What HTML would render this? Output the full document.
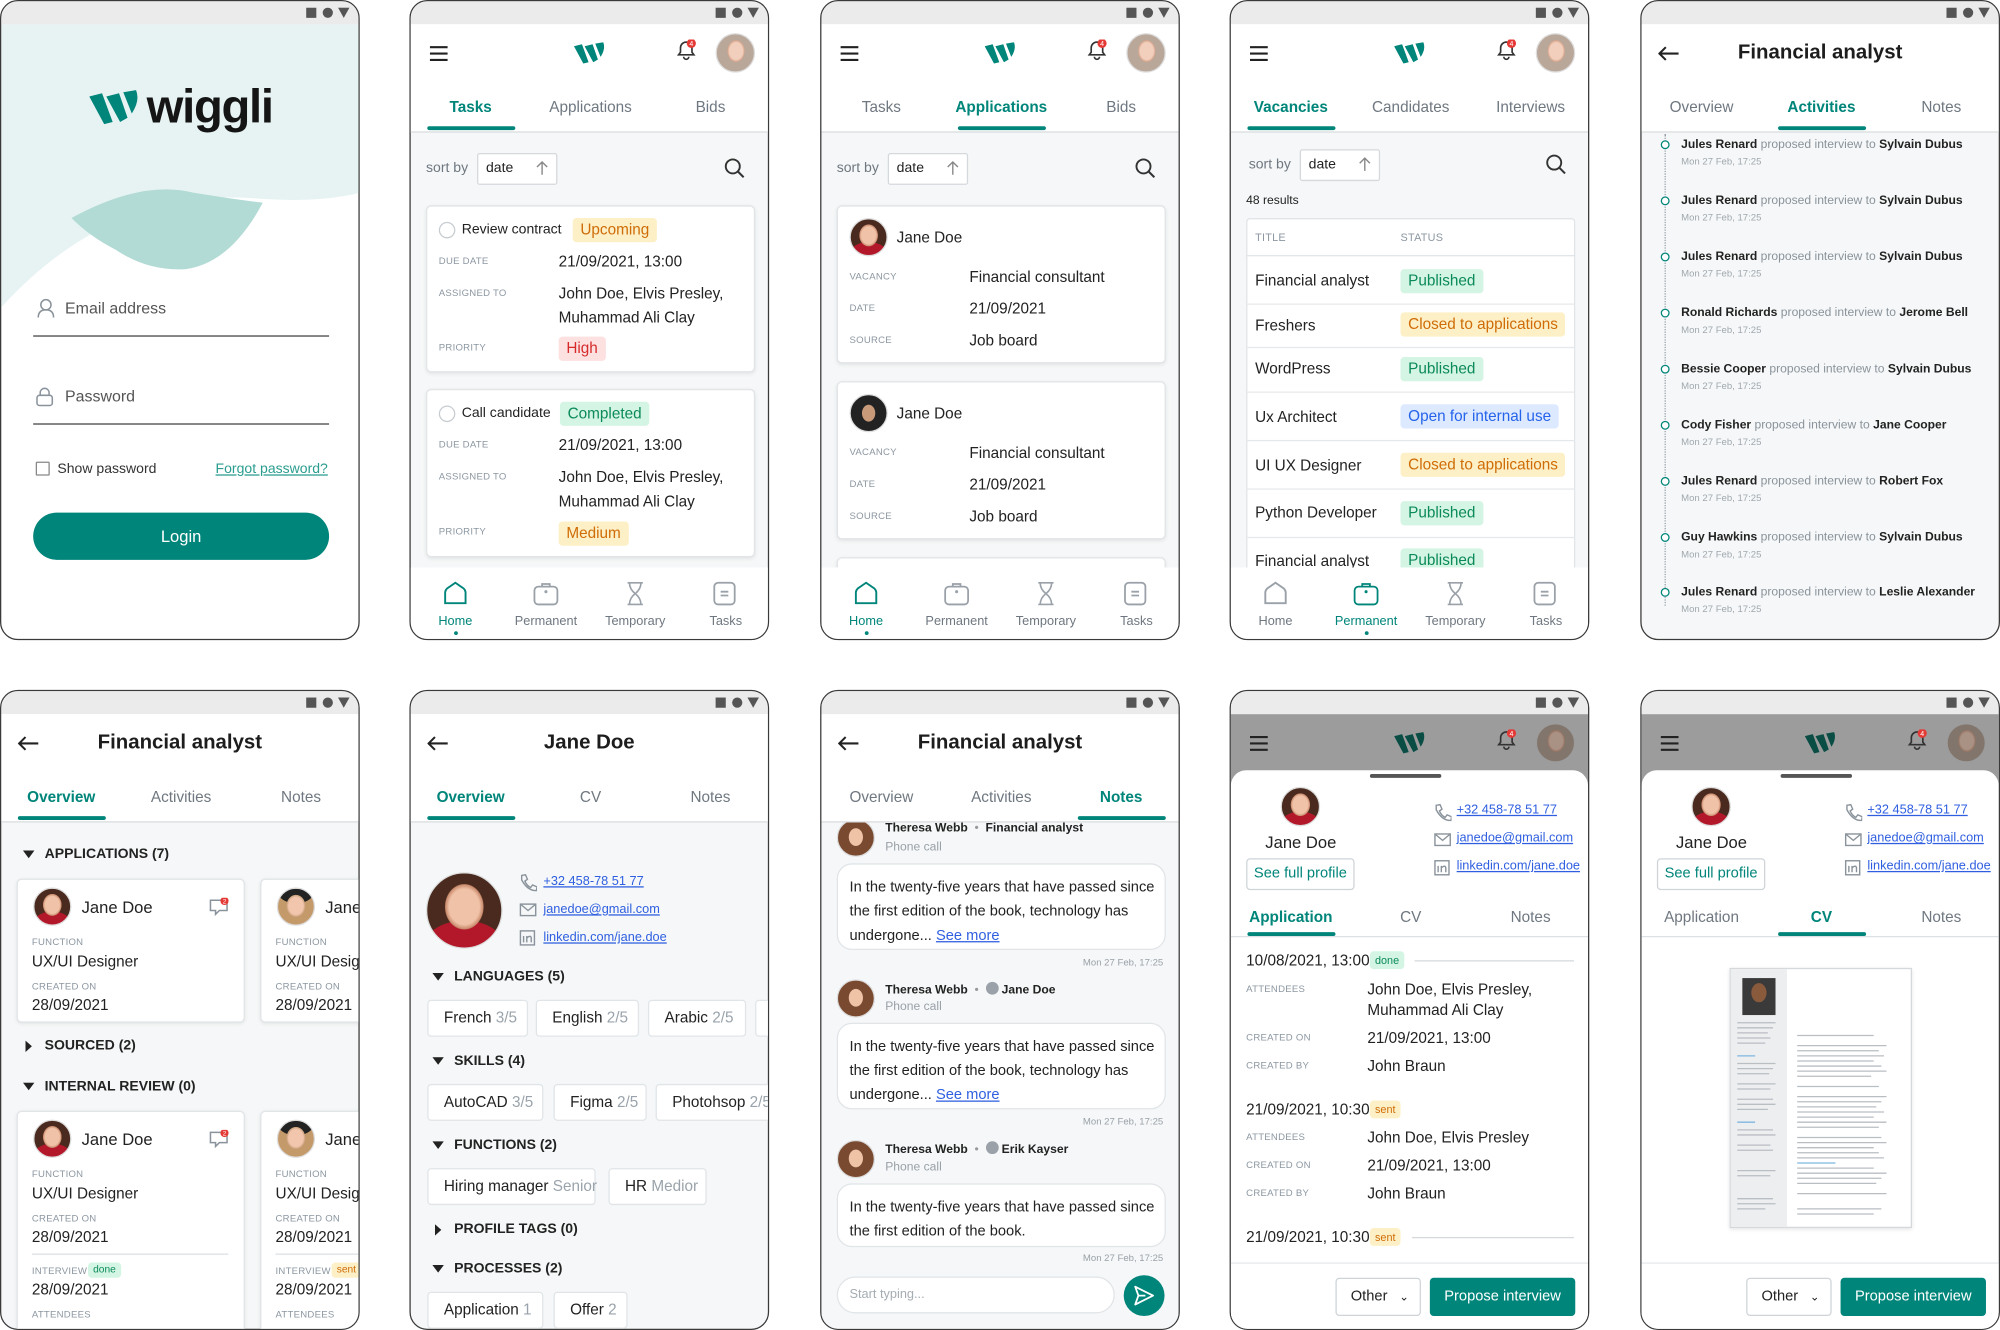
<!DOCTYPE html>
<html><head><meta charset="utf-8"><style>
*{margin:0;padding:0;box-sizing:border-box}
html,body{width:2000px;height:1330px;background:#fff;overflow:hidden;font-family:"Liberation Sans",Arial,sans-serif;color:#222}
#w{position:absolute;left:0;top:0;width:1568px;height:1043px;transform:scale(1.27551,1.2752);transform-origin:0 0}
.ph{position:absolute;width:282px;height:502px;border:1px solid #3a3a3a;border-radius:14px;overflow:hidden;background:#f5f7f8}
.sb{position:absolute;left:0;top:0;width:100%;height:18px;background:#ebebeb}
.t{position:absolute;white-space:nowrap;line-height:1}
.lb{font-size:7.5px;color:#8c97a1;letter-spacing:.2px}
.v{font-size:12px;color:#222}
.bd{position:absolute;font-size:12px;line-height:19px;height:19px;padding:0 6px;border-radius:3px;white-space:nowrap}
.g{background:#d4f5e4;color:#0b8a58}.y{background:#fdf0c6;color:#cf6c07}.r{background:#fde0e0;color:#d52b2b}.b{background:#dde9ff;color:#2563eb}
.hd{position:absolute;left:0;top:18px;width:100%;height:85px;background:#fff;border-bottom:1px solid #d9dcdf}
.tab{position:absolute;top:76px;font-size:12px;color:#6f7780;transform:translateX(-50%)}
.tab.a{color:#00857a;font-weight:bold}
.ul{position:absolute;top:98px;height:3px;width:69px;background:#00857a;border-radius:2px}
.card{position:absolute;background:#fff;border:1px solid #e1e5e8;border-radius:4px;box-shadow:0 1px 3px rgba(0,0,0,.08)}
.nav{position:absolute;left:0;top:444px;width:100%;height:58px;background:#fff}
.nl{position:absolute;top:481px;font-size:10px;color:#6f7780;transform:translateX(-50%)}
.av{position:absolute;border-radius:50%;background:radial-gradient(ellipse 34% 40% at 50% 45%,#f0c2a8 0 60%,#c98a6c 75%,transparent 78%),radial-gradient(ellipse 60% 40% at 50% 100%,#b3182a 0 90%,transparent 92%),#4a2a1e;border:1px solid #ddd}
.av2{background:radial-gradient(ellipse 34% 40% at 50% 48%,#f1c6ad 0 60%,#caa07c 76%,transparent 79%),radial-gradient(ellipse 60% 45% at 50% 0%,#222 0 90%,transparent 92%),#c49a6a}
.av3{background:radial-gradient(ellipse 30% 38% at 52% 45%,#f2cfbd 0 60%,#d6a48a 76%,transparent 79%),#b9a79a}
.sec{position:absolute;font-size:11px;font-weight:bold;color:#222;line-height:1;white-space:nowrap}
.chip{position:absolute;height:29px;background:#fff;border:1px solid #e1e5e8;border-radius:3px;font-size:12px;line-height:27px;padding-left:12px;white-space:nowrap;color:#222}
.chip span{color:#9aa3ab}
.lk{position:absolute;font-size:10px;color:#2f5fe0;text-decoration:underline;line-height:1;white-space:nowrap}
.ttl{position:absolute;top:33px;left:0;width:100%;text-align:center;font-size:16px;font-weight:bold;color:#1d1d1d;line-height:1}
.act{position:absolute;left:31px;font-size:9.5px;color:#8a939b;white-space:nowrap;line-height:1}
.act b{color:#222}
.ad{position:absolute;left:31px;font-size:7.5px;color:#a0a8ae;line-height:1}
.dot{position:absolute;left:15px;width:7px;height:7px;border:1.6px solid #00857a;border-radius:50%;background:#fff}
</style></head><body><div id="w">

<svg width="0" height="0" style="position:absolute"><defs>
<g id="sbar"><rect x="0" y="0" width="8" height="8" fill="#555"/><circle cx="17" cy="4" r="4" fill="#555"/><path d="M25 0h9l-4.5 8z" fill="#555"/></g>
<g id="logo"><path d="M0 3 L6 1.5 L11 15 L7 16 Z M8 3 L14 1.5 L18 13 L14.5 15 Z M16 1 L22 0 Q24 5 20 11 Z" fill="#00857a"/></g>
<g id="ham"><path d="M0 1h14M0 6h14M0 11h14" stroke="#222" stroke-width="1.6"/></g>
<g id="bell"><path d="M2 12h12l-1.5-2V6.5a4.5 4.5 0 0 0-9 0V10z M6 13.5a2 2 0 0 0 4 0" fill="none" stroke="#333" stroke-width="1.3"/><circle cx="12" cy="3" r="3.6" fill="#e53935"/><text x="12" y="5.2" font-size="5.5" fill="#fff" text-anchor="middle" font-family="Liberation Sans">4</text></g>
<g id="back"><path d="M16 6H1M6 1L1 6l5 5" fill="none" stroke="#222" stroke-width="1.6"/></g>
<g id="srch"><circle cx="6.5" cy="6.5" r="5.5" fill="none" stroke="#333" stroke-width="1.5"/><path d="M10.5 10.5L15 15" stroke="#333" stroke-width="1.6"/></g>
<g id="home"><path d="M1 17V8.5Q1 7 2.5 5.5L9 1l6.5 4.5Q17 7 17 8.5V17z" fill="none" stroke-width="1.5"/></g>
<g id="brief"><rect x="1" y="4" width="18" height="14" rx="3" fill="none" stroke-width="1.4"/><path d="M7 4V2h6v2" fill="none" stroke-width="1.4"/><circle cx="10" cy="8" r=".7"/></g>
<g id="hour"><path d="M2 1h12M2 18h12M3.5 1q0 5 4.5 8.5Q3.5 13 3.5 18M12.5 1q0 5-4.5 8.5Q12.5 13 12.5 18" fill="none" stroke-width="1.3"/></g>
<g id="task"><rect x="1" y="1" width="16" height="17" rx="3" fill="none" stroke-width="1.4"/><path d="M6 8h6M6 11h6" stroke-width="1.4"/></g>
<g id="phn"><path d="M2 1.5l3-0.5 1.5 3.5-2 1.5q1.5 3.5 4.5 5l1.5-2 3.5 1.5-.5 3q-7 0-11.5-8.5z" fill="none" stroke="#8a939b" stroke-width="1.1"/></g>
<g id="mail"><rect x="1" y="2" width="12" height="9" fill="none" stroke="#8a939b" stroke-width="1.1"/><path d="M1 2l6 5 6-5" fill="none" stroke="#8a939b" stroke-width="1.1"/></g>
<g id="lin"><rect x="1" y="1" width="11" height="11" fill="none" stroke="#8a939b" stroke-width="1.1"/><path d="M3.5 5v5M6 5v5M6 6.5q3-2.5 3.5 0V10" fill="none" stroke="#8a939b" stroke-width="1.1"/></g>
<g id="chat"><path d="M1 2h13v8H8l-3 3v-3H1z" fill="none" stroke="#8a939b" stroke-width="1.2"/><circle cx="12" cy="2.5" r="3.2" fill="#e53935"/><text x="12" y="4.5" font-size="5" fill="#fff" text-anchor="middle" font-family="Liberation Sans">2</text></g>
</defs></svg>

<!-- P1 login -->
<div class="ph" style="left:0;top:0;background:#fff">
<svg style="position:absolute;left:0;top:0" width="282" height="502"><path d="M0 18H282V150Q250 158 205 155Q150 150 110 165Q50 185 0 240Z" fill="#e6f3f2"/><path d="M55 170Q110 140 150 150Q180 155 205 158Q180 205 145 210Q115 212 90 195Q70 185 55 170Z" fill="#b3dbd6"/></svg>
<div class="sb"><svg style="position:absolute;left:239px;top:5px" width="36" height="9"><use href="#sbar"/></svg></div>
<svg style="position:absolute;left:69px;top:68px" width="40" height="30" viewBox="0 0 24 16"><use href="#logo"/></svg>
<div class="t" style="left:114px;top:64px;font-size:37px;font-weight:bold;color:#151515;letter-spacing:-1px">wiggli</div>
<svg style="position:absolute;left:28px;top:233px" width="14" height="16"><circle cx="7" cy="5" r="4" fill="none" stroke="#8a939b" stroke-width="1.2"/><path d="M1 15q0-6 6-6t6 6" fill="none" stroke="#8a939b" stroke-width="1.2"/></svg>
<div class="t" style="left:50px;top:235px;font-size:12.5px;color:#555">Email address</div>
<div style="position:absolute;left:25px;top:262px;width:232px;height:1px;background:#444"></div>
<svg style="position:absolute;left:27px;top:302px" width="14" height="16"><rect x="1" y="7" width="12" height="8" rx="2" fill="none" stroke="#8a939b" stroke-width="1.2"/><path d="M3.5 7V5a3.5 3.5 0 0 1 7 0v2" fill="none" stroke="#8a939b" stroke-width="1.2"/></svg>
<div class="t" style="left:50px;top:304px;font-size:12.5px;color:#555">Password</div>
<div style="position:absolute;left:25px;top:331px;width:232px;height:1px;background:#444"></div>
<div style="position:absolute;left:27px;top:361px;width:11px;height:11px;border:1px solid #888;border-radius:1px"></div>
<div class="t" style="left:44px;top:362px;font-size:11px;color:#333">Show password</div>
<div class="t" style="left:168px;top:362px;font-size:11px;color:#2a9d8f;text-decoration:underline">Forgot password?</div>
<div style="position:absolute;left:25px;top:401px;width:232px;height:37px;background:#00857a;border-radius:19px;color:#fff;font-size:13px;text-align:center;line-height:37px">Login</div>
</div>

<!-- P2 tasks -->
<div class="ph" style="left:321px;top:0">
<div class="sb"><svg style="position:absolute;left:239px;top:5px" width="36" height="9"><use href="#sbar"/></svg></div>
<div class="hd"></div>
<svg style="position:absolute;left:15px;top:35px" width="14" height="13"><use href="#ham"/></svg>
<svg style="position:absolute;left:128px;top:32px" width="25" height="17" viewBox="0 0 24 16"><use href="#logo"/></svg>
<svg style="position:absolute;left:208px;top:30px" width="17" height="17"><use href="#bell"/></svg>
<div class="av av3" style="left:239px;top:25px;width:31px;height:31px"></div>
<div class="tab a" style="left:47px">Tasks</div><div class="tab" style="left:141px">Applications</div><div class="tab" style="left:235px">Bids</div>
<div class="ul" style="left:13px"></div>
<div class="t" style="left:12px;top:126px;font-size:11px;color:#6f7780">sort by</div>
<div style="position:absolute;left:52px;top:119px;width:63px;height:25px;border:1px solid #d5d9dc;border-radius:2px;background:#fff"></div>
<div class="t" style="left:59px;top:126px;font-size:11px;color:#222">date</div>
<svg style="position:absolute;left:98px;top:125px" width="10" height="12"><path d="M5 11V1M1 5l4-4 4 4" fill="none" stroke="#888" stroke-width="1.1"/></svg>
<svg style="position:absolute;left:246px;top:123px" width="17" height="17"><use href="#srch"/></svg>
<div class="card" style="left:12px;top:160px;width:258px;height:131px"></div>
<div style="position:absolute;left:22px;top:173px;width:13px;height:13px;border:1px solid #c7ccd0;border-radius:50%;background:#fff"></div>
<div class="t" style="left:40px;top:174px;font-size:11px">Review contract</div>
<div class="bd y" style="left:127px;top:170px">Upcoming</div>
<div class="t lb" style="left:22px;top:200px">DUE DATE</div><div class="t v" style="left:116px;top:198px">21/09/2021, 13:00</div>
<div class="t lb" style="left:22px;top:225px">ASSIGNED TO</div><div class="t v" style="left:116px;top:223px">John Doe, Elvis Presley,</div><div class="t v" style="left:116px;top:242px">Muhammad Ali Clay</div>
<div class="t lb" style="left:22px;top:268px">PRIORITY</div><div class="bd r" style="left:116px;top:263px">High</div>
<div class="card" style="left:12px;top:304px;width:258px;height:132px"></div>
<div style="position:absolute;left:22px;top:317px;width:13px;height:13px;border:1px solid #c7ccd0;border-radius:50%;background:#fff"></div>
<div class="t" style="left:40px;top:318px;font-size:11px">Call candidate</div>
<div class="bd g" style="left:117px;top:314px">Completed</div>
<div class="t lb" style="left:22px;top:344px">DUE DATE</div><div class="t v" style="left:116px;top:342px">21/09/2021, 13:00</div>
<div class="t lb" style="left:22px;top:369px">ASSIGNED TO</div><div class="t v" style="left:116px;top:367px">John Doe, Elvis Presley,</div><div class="t v" style="left:116px;top:386px">Muhammad Ali Clay</div>
<div class="t lb" style="left:22px;top:412px">PRIORITY</div><div class="bd y" style="left:116px;top:408px">Medium</div>
<div class="nav"></div>
<svg style="position:absolute;left:26px;top:455px" width="19" height="19" stroke="#00857a"><use href="#home"/></svg>
<svg style="position:absolute;left:96px;top:455px" width="21" height="19" stroke="#9aa1a8" fill="#9aa1a8"><use href="#brief"/></svg>
<svg style="position:absolute;left:168px;top:455px" width="16" height="19" stroke="#9aa1a8"><use href="#hour"/></svg>
<svg style="position:absolute;left:237px;top:455px" width="19" height="19" stroke="#9aa1a8"><use href="#task"/></svg>
<div class="nl" style="left:35px;color:#00857a">Home</div><div class="nl" style="left:106px">Permanent</div><div class="nl" style="left:176px">Temporary</div><div class="nl" style="left:247px">Tasks</div>
<div style="position:absolute;left:34px;top:494px;width:3px;height:3px;border-radius:50%;background:#00857a"></div>
</div>

<!-- P3 applications -->
<div class="ph" style="left:643px;top:0">
<div class="sb"><svg style="position:absolute;left:239px;top:5px" width="36" height="9"><use href="#sbar"/></svg></div>
<div class="hd"></div>
<svg style="position:absolute;left:15px;top:35px" width="14" height="13"><use href="#ham"/></svg>
<svg style="position:absolute;left:128px;top:32px" width="25" height="17" viewBox="0 0 24 16"><use href="#logo"/></svg>
<svg style="position:absolute;left:208px;top:30px" width="17" height="17"><use href="#bell"/></svg>
<div class="av av3" style="left:239px;top:25px;width:31px;height:31px"></div>
<div class="tab" style="left:47px">Tasks</div><div class="tab a" style="left:141px">Applications</div><div class="tab" style="left:235px">Bids</div>
<div class="ul" style="left:107px"></div>
<div class="t" style="left:12px;top:126px;font-size:11px;color:#6f7780">sort by</div>
<div style="position:absolute;left:52px;top:119px;width:63px;height:25px;border:1px solid #d5d9dc;border-radius:2px;background:#fff"></div>
<div class="t" style="left:59px;top:126px;font-size:11px;color:#222">date</div>
<svg style="position:absolute;left:98px;top:125px" width="10" height="12"><path d="M5 11V1M1 5l4-4 4 4" fill="none" stroke="#888" stroke-width="1.1"/></svg>
<svg style="position:absolute;left:246px;top:123px" width="17" height="17"><use href="#srch"/></svg>
<div class="card" style="left:12px;top:160px;width:258px;height:124px"></div>
<div class="av" style="left:22px;top:170px;width:30px;height:30px"></div>
<div class="t v" style="left:59px;top:179px">Jane Doe</div>
<div class="t lb" style="left:22px;top:212px">VACANCY</div><div class="t v" style="left:116px;top:210px">Financial consultant</div>
<div class="t lb" style="left:22px;top:237px">DATE</div><div class="t v" style="left:116px;top:235px">21/09/2021</div>
<div class="t lb" style="left:22px;top:262px">SOURCE</div><div class="t v" style="left:116px;top:260px">Job board</div>
<div class="card" style="left:12px;top:298px;width:258px;height:124px"></div>
<div class="av" style="left:22px;top:308px;width:30px;height:30px;background:radial-gradient(ellipse 30% 38% at 50% 50%,#c89a7a 0 60%,transparent 64%),#222"></div>
<div class="t v" style="left:59px;top:317px">Jane Doe</div>
<div class="t lb" style="left:22px;top:350px">VACANCY</div><div class="t v" style="left:116px;top:348px">Financial consultant</div>
<div class="t lb" style="left:22px;top:375px">DATE</div><div class="t v" style="left:116px;top:373px">21/09/2021</div>
<div class="t lb" style="left:22px;top:400px">SOURCE</div><div class="t v" style="left:116px;top:398px">Job board</div>
<div class="card" style="left:12px;top:436px;width:258px;height:40px"></div>
<div class="nav"></div>
<svg style="position:absolute;left:26px;top:455px" width="19" height="19" stroke="#00857a"><use href="#home"/></svg>
<svg style="position:absolute;left:96px;top:455px" width="21" height="19" stroke="#9aa1a8" fill="#9aa1a8"><use href="#brief"/></svg>
<svg style="position:absolute;left:168px;top:455px" width="16" height="19" stroke="#9aa1a8"><use href="#hour"/></svg>
<svg style="position:absolute;left:237px;top:455px" width="19" height="19" stroke="#9aa1a8"><use href="#task"/></svg>
<div class="nl" style="left:35px;color:#00857a">Home</div><div class="nl" style="left:106px">Permanent</div><div class="nl" style="left:176px">Temporary</div><div class="nl" style="left:247px">Tasks</div>
<div style="position:absolute;left:34px;top:494px;width:3px;height:3px;border-radius:50%;background:#00857a"></div>
</div>

<!-- P4 vacancies -->
<div class="ph" style="left:964px;top:0">
<div class="sb"><svg style="position:absolute;left:239px;top:5px" width="36" height="9"><use href="#sbar"/></svg></div>
<div class="hd"></div>
<svg style="position:absolute;left:15px;top:35px" width="14" height="13"><use href="#ham"/></svg>
<svg style="position:absolute;left:128px;top:32px" width="25" height="17" viewBox="0 0 24 16"><use href="#logo"/></svg>
<svg style="position:absolute;left:208px;top:30px" width="17" height="17"><use href="#bell"/></svg>
<div class="av av3" style="left:239px;top:25px;width:31px;height:31px"></div>
<div class="tab a" style="left:47px">Vacancies</div><div class="tab" style="left:141px">Candidates</div><div class="tab" style="left:235px">Interviews</div>
<div class="ul" style="left:13px"></div>
<div class="t" style="left:14px;top:123px;font-size:11px;color:#6f7780">sort by</div>
<div style="position:absolute;left:54px;top:116px;width:63px;height:25px;border:1px solid #d5d9dc;border-radius:2px;background:#fff"></div>
<div class="t" style="left:61px;top:123px;font-size:11px;color:#222">date</div>
<svg style="position:absolute;left:100px;top:122px" width="10" height="12"><path d="M5 11V1M1 5l4-4 4 4" fill="none" stroke="#888" stroke-width="1.1"/></svg>
<svg style="position:absolute;left:247px;top:120px" width="17" height="17"><use href="#srch"/></svg>
<div class="t" style="left:12px;top:152px;font-size:9.5px;color:#222">48 results</div>
<div style="position:absolute;left:12px;top:170px;width:258px;height:290px;background:#fff;border:1px solid #e1e5e8;border-radius:3px"></div>
<div class="t lb" style="left:19px;top:181px;font-size:8.5px">TITLE</div><div class="t lb" style="left:133px;top:181px;font-size:8.5px">STATUS</div>
<div style="position:absolute;left:12px;top:199px;width:258px;height:1px;background:#e1e5e8"></div>
<div class="t v" style="left:19px;top:213px">Financial analyst</div><div class="bd g" style="left:133px;top:210px">Published</div>
<div style="position:absolute;left:12px;top:237px;width:258px;height:1px;background:#e6e9eb"></div>
<div class="t v" style="left:19px;top:248px">Freshers</div><div class="bd y" style="left:133px;top:244px">Closed to applications</div>
<div style="position:absolute;left:12px;top:271px;width:258px;height:1px;background:#e6e9eb"></div>
<div class="t v" style="left:19px;top:282px">WordPress</div><div class="bd g" style="left:133px;top:279px">Published</div>
<div style="position:absolute;left:12px;top:306px;width:258px;height:1px;background:#e6e9eb"></div>
<div class="t v" style="left:19px;top:320px">Ux Architect</div><div class="bd b" style="left:133px;top:316px">Open for internal use</div>
<div style="position:absolute;left:12px;top:344px;width:258px;height:1px;background:#e6e9eb"></div>
<div class="t v" style="left:19px;top:358px">UI UX Designer</div><div class="bd y" style="left:133px;top:354px">Closed to applications</div>
<div style="position:absolute;left:12px;top:382px;width:258px;height:1px;background:#e6e9eb"></div>
<div class="t v" style="left:19px;top:395px">Python Developer</div><div class="bd g" style="left:133px;top:392px">Published</div>
<div style="position:absolute;left:12px;top:420px;width:258px;height:1px;background:#e6e9eb"></div>
<div class="t v" style="left:19px;top:433px">Financial analyst</div><div class="bd g" style="left:133px;top:429px">Published</div>
<div class="nav"></div>
<svg style="position:absolute;left:26px;top:455px" width="19" height="19" stroke="#9aa1a8"><use href="#home"/></svg>
<svg style="position:absolute;left:96px;top:455px" width="21" height="19" stroke="#00857a" fill="#00857a"><use href="#brief"/></svg>
<svg style="position:absolute;left:168px;top:455px" width="16" height="19" stroke="#9aa1a8"><use href="#hour"/></svg>
<svg style="position:absolute;left:237px;top:455px" width="19" height="19" stroke="#9aa1a8"><use href="#task"/></svg>
<div class="nl" style="left:35px">Home</div><div class="nl" style="left:106px;color:#00857a">Permanent</div><div class="nl" style="left:176px">Temporary</div><div class="nl" style="left:247px">Tasks</div>
<div style="position:absolute;left:105px;top:494px;width:3px;height:3px;border-radius:50%;background:#00857a"></div>
</div>

<!-- P5 activities -->
<div class="ph" style="left:1286px;top:0">
<div class="sb"><svg style="position:absolute;left:239px;top:5px" width="36" height="9"><use href="#sbar"/></svg></div>
<div class="hd"></div>
<svg style="position:absolute;left:13px;top:35px" width="17" height="12"><use href="#back"/></svg>
<div class="ttl">Financial analyst</div>
<div class="tab" style="left:47px">Overview</div><div class="tab a" style="left:141px">Activities</div><div class="tab" style="left:235px">Notes</div>
<div class="ul" style="left:107px"></div>
<div style="position:absolute;left:18px;top:104px;height:370px;border-left:1px dotted #9aa1a8"></div>
<div class="dot" style="top:109px"></div><div class="act" style="top:108px"><b>Jules Renard</b> proposed interview to <b>Sylvain Dubus</b></div><div class="ad" style="top:122px">Mon 27 Feb, 17:25</div>
<div class="dot" style="top:153px"></div><div class="act" style="top:152px"><b>Jules Renard</b> proposed interview to <b>Sylvain Dubus</b></div><div class="ad" style="top:166px">Mon 27 Feb, 17:25</div>
<div class="dot" style="top:197px"></div><div class="act" style="top:196px"><b>Jules Renard</b> proposed interview to <b>Sylvain Dubus</b></div><div class="ad" style="top:210px">Mon 27 Feb, 17:25</div>
<div class="dot" style="top:241px"></div><div class="act" style="top:240px"><b>Ronald Richards</b> proposed interview to <b>Jerome Bell</b></div><div class="ad" style="top:254px">Mon 27 Feb, 17:25</div>
<div class="dot" style="top:285px"></div><div class="act" style="top:284px"><b>Bessie Cooper</b> proposed interview to <b>Sylvain Dubus</b></div><div class="ad" style="top:298px">Mon 27 Feb, 17:25</div>
<div class="dot" style="top:329px"></div><div class="act" style="top:328px"><b>Cody Fisher</b> proposed interview to <b>Jane Cooper</b></div><div class="ad" style="top:342px">Mon 27 Feb, 17:25</div>
<div class="dot" style="top:373px"></div><div class="act" style="top:372px"><b>Jules Renard</b> proposed interview to <b>Robert Fox</b></div><div class="ad" style="top:386px">Mon 27 Feb, 17:25</div>
<div class="dot" style="top:417px"></div><div class="act" style="top:416px"><b>Guy Hawkins</b> proposed interview to <b>Sylvain Dubus</b></div><div class="ad" style="top:430px">Mon 27 Feb, 17:25</div>
<div class="dot" style="top:460px"></div><div class="act" style="top:459px"><b>Jules Renard</b> proposed interview to <b>Leslie Alexander</b></div><div class="ad" style="top:473px">Mon 27 Feb, 17:25</div>
</div>

<!-- B1 overview -->
<div class="ph" style="left:0;top:541px">
<div class="sb"><svg style="position:absolute;left:239px;top:5px" width="36" height="9"><use href="#sbar"/></svg></div>
<div class="hd"></div>
<svg style="position:absolute;left:13px;top:35px" width="17" height="12"><use href="#back"/></svg>
<div class="ttl">Financial analyst</div>
<div class="tab a" style="left:47px">Overview</div><div class="tab" style="left:141px">Activities</div><div class="tab" style="left:235px">Notes</div>
<div class="ul" style="left:13px"></div>
<svg style="position:absolute;left:17px;top:125px" width="9" height="7"><path d="M0 0h9L4.5 6z" fill="#222"/></svg><div class="sec" style="left:34px;top:123px">APPLICATIONS (7)</div>
<div class="card" style="left:12px;top:147px;width:179px;height:113px"></div>
<div class="av" style="left:25px;top:154px;width:30px;height:30px"></div>
<div class="t" style="left:63px;top:163px;font-size:13px">Jane Doe</div>
<svg style="position:absolute;left:163px;top:162px" width="16" height="15"><use href="#chat"/></svg>
<div class="t lb" style="left:24px;top:193px">FUNCTION</div><div class="t v" style="left:24px;top:206px">UX/UI Designer</div>
<div class="t lb" style="left:24px;top:228px">CREATED ON</div><div class="t v" style="left:24px;top:240px">28/09/2021</div>
<div class="card" style="left:203px;top:147px;width:100px;height:113px"></div>
<div class="av av2" style="left:216px;top:154px;width:30px;height:30px"></div>
<div class="t" style="left:254px;top:163px;font-size:13px">Jane Doe</div>
<div class="t lb" style="left:215px;top:193px">FUNCTION</div><div class="t v" style="left:215px;top:206px">UX/UI Designer</div>
<div class="t lb" style="left:215px;top:228px">CREATED ON</div><div class="t v" style="left:215px;top:240px">28/09/2021</div>
<svg style="position:absolute;left:19px;top:274px" width="6" height="9"><path d="M0 0v9l5-4.5z" fill="#222"/></svg><div class="sec" style="left:34px;top:273px">SOURCED (2)</div>
<svg style="position:absolute;left:17px;top:307px" width="9" height="7"><path d="M0 0h9L4.5 6z" fill="#222"/></svg><div class="sec" style="left:34px;top:305px">INTERNAL REVIEW (0)</div>
<div class="card" style="left:12px;top:329px;width:179px;height:190px"></div>
<div class="av" style="left:25px;top:336px;width:30px;height:30px"></div>
<div class="t" style="left:63px;top:345px;font-size:13px">Jane Doe</div>
<svg style="position:absolute;left:163px;top:344px" width="16" height="15"><use href="#chat"/></svg>
<div class="t lb" style="left:24px;top:375px">FUNCTION</div><div class="t v" style="left:24px;top:388px">UX/UI Designer</div>
<div class="t lb" style="left:24px;top:410px">CREATED ON</div><div class="t v" style="left:24px;top:422px">28/09/2021</div>
<div style="position:absolute;left:24px;top:441px;width:154px;height:1px;background:#dde1e4"></div>
<div class="t lb" style="left:24px;top:451px">INTERVIEW</div><div class="bd g" style="left:68px;top:448px;font-size:8px;line-height:12px;height:12px;padding:0 4px">done</div>
<div class="t v" style="left:24px;top:463px">28/09/2021</div>
<div class="t lb" style="left:24px;top:485px">ATTENDEES</div>
<div class="card" style="left:203px;top:329px;width:100px;height:190px"></div>
<div class="av av2" style="left:216px;top:336px;width:30px;height:30px"></div>
<div class="t" style="left:254px;top:345px;font-size:13px">Jane Doe</div>
<div class="t lb" style="left:215px;top:375px">FUNCTION</div><div class="t v" style="left:215px;top:388px">UX/UI Designer</div>
<div class="t lb" style="left:215px;top:410px">CREATED ON</div><div class="t v" style="left:215px;top:422px">28/09/2021</div>
<div style="position:absolute;left:215px;top:441px;width:80px;height:1px;background:#dde1e4"></div>
<div class="t lb" style="left:215px;top:451px">INTERVIEW</div><div class="bd y" style="left:259px;top:448px;font-size:8px;line-height:12px;height:12px;padding:0 4px">sent</div>
<div class="t v" style="left:215px;top:463px">28/09/2021</div>
<div class="t lb" style="left:215px;top:485px">ATTENDEES</div>
</div>

<!-- B2 Jane Doe -->
<div class="ph" style="left:321px;top:541px">
<div class="sb"><svg style="position:absolute;left:239px;top:5px" width="36" height="9"><use href="#sbar"/></svg></div>
<div class="hd"></div>
<svg style="position:absolute;left:13px;top:35px" width="17" height="12"><use href="#back"/></svg>
<div class="ttl">Jane Doe</div>
<div class="tab a" style="left:47px">Overview</div><div class="tab" style="left:141px">CV</div><div class="tab" style="left:235px">Notes</div>
<div class="ul" style="left:13px"></div>
<div class="av" style="left:12px;top:142px;width:60px;height:60px"></div>
<svg style="position:absolute;left:85px;top:143px" width="14" height="14"><use href="#phn"/></svg><div class="lk" style="left:104px;top:145px">+32 458-78 51 77</div>
<svg style="position:absolute;left:85px;top:165px" width="14" height="13"><use href="#mail"/></svg><div class="lk" style="left:104px;top:167px">janedoe@gmail.com</div>
<svg style="position:absolute;left:85px;top:187px" width="13" height="13"><use href="#lin"/></svg><div class="lk" style="left:104px;top:189px">linkedin.com/jane.doe</div>
<svg style="position:absolute;left:17px;top:221px" width="9" height="7"><path d="M0 0h9L4.5 6z" fill="#222"/></svg><div class="sec" style="left:34px;top:219px">LANGUAGES (5)</div>
<div class="chip" style="left:13px;top:242px;width:79px">French <span>3/5</span></div>
<div class="chip" style="left:98px;top:242px;width:81px">English <span>2/5</span></div>
<div class="chip" style="left:186px;top:242px;width:77px">Arabic <span>2/5</span></div>
<div class="chip" style="left:270px;top:242px;width:40px"></div>
<svg style="position:absolute;left:17px;top:287px" width="9" height="7"><path d="M0 0h9L4.5 6z" fill="#222"/></svg><div class="sec" style="left:34px;top:285px">SKILLS (4)</div>
<div class="chip" style="left:13px;top:308px;width:91px">AutoCAD <span>3/5</span></div>
<div class="chip" style="left:112px;top:308px;width:73px">Figma <span>2/5</span></div>
<div class="chip" style="left:192px;top:308px;width:95px">Photohsop <span>2/5</span></div>
<svg style="position:absolute;left:17px;top:353px" width="9" height="7"><path d="M0 0h9L4.5 6z" fill="#222"/></svg><div class="sec" style="left:34px;top:351px">FUNCTIONS (2)</div>
<div class="chip" style="left:13px;top:374px;width:132px">Hiring manager <span>Senior</span></div>
<div class="chip" style="left:155px;top:374px;width:77px">HR <span>Medior</span></div>
<svg style="position:absolute;left:19px;top:418px" width="6" height="9"><path d="M0 0v9l5-4.5z" fill="#222"/></svg><div class="sec" style="left:34px;top:417px">PROFILE TAGS (0)</div>
<svg style="position:absolute;left:17px;top:450px" width="9" height="7"><path d="M0 0h9L4.5 6z" fill="#222"/></svg><div class="sec" style="left:34px;top:448px">PROCESSES (2)</div>
<div class="chip" style="left:13px;top:471px;width:91px">Application <span>1</span></div>
<div class="chip" style="left:112px;top:471px;width:58px">Offer <span>2</span></div>
</div>

<!-- B3 notes -->
<div class="ph" style="left:643px;top:541px">
<div class="av" style="left:12px;top:100px;width:30px;height:30px;background:radial-gradient(ellipse 32% 40% at 50% 48%,#eec3a6 0 60%,transparent 64%),#7a4a30"></div>
<div class="t" style="left:50px;top:103px;font-size:9.5px;font-weight:bold">Theresa Webb <span style="color:#999;font-weight:normal">&nbsp;•&nbsp;</span> Financial analyst</div>
<div class="t" style="left:50px;top:118px;font-size:9.5px;color:#9aa1a8">Phone call</div>
<div style="position:absolute;left:12px;top:135px;width:258px;height:68px;background:#fff;border:1px solid #e1e5e8;border-radius:12px"></div>
<div class="t" style="left:22px;top:145px;font-size:11.5px;line-height:19px">In the twenty-five years that have passed since<br>the first edition of the book, technology has<br>undergone... <span style="color:#2f5fe0;text-decoration:underline">See more</span></div>
<div class="t" style="left:205px;top:209px;font-size:7.5px;color:#9aa1a8">Mon 27 Feb, 17:25</div>
<div class="av" style="left:12px;top:226px;width:30px;height:30px;background:radial-gradient(ellipse 32% 40% at 50% 48%,#eec3a6 0 60%,transparent 64%),#7a4a30"></div>
<div class="t" style="left:50px;top:228px;font-size:9.5px;font-weight:bold">Theresa Webb <span style="color:#999;font-weight:normal">&nbsp;•&nbsp;</span> <span style="display:inline-block;width:10px;height:10px;border-radius:50%;background:#9aa1a8;vertical-align:-1px"></span> Jane Doe</div>
<div class="t" style="left:50px;top:243px;font-size:9.5px;color:#9aa1a8">Phone call</div>
<div style="position:absolute;left:12px;top:260px;width:258px;height:68px;background:#fff;border:1px solid #e1e5e8;border-radius:12px"></div>
<div class="t" style="left:22px;top:270px;font-size:11.5px;line-height:19px">In the twenty-five years that have passed since<br>the first edition of the book, technology has<br>undergone... <span style="color:#2f5fe0;text-decoration:underline">See more</span></div>
<div class="t" style="left:205px;top:334px;font-size:7.5px;color:#9aa1a8">Mon 27 Feb, 17:25</div>
<div class="av" style="left:12px;top:352px;width:30px;height:30px;background:radial-gradient(ellipse 32% 40% at 50% 48%,#eec3a6 0 60%,transparent 64%),#7a4a30"></div>
<div class="t" style="left:50px;top:353px;font-size:9.5px;font-weight:bold">Theresa Webb <span style="color:#999;font-weight:normal">&nbsp;•&nbsp;</span> <span style="display:inline-block;width:10px;height:10px;border-radius:50%;background:#9aa1a8;vertical-align:-1px"></span> Erik Kayser</div>
<div class="t" style="left:50px;top:369px;font-size:9.5px;color:#9aa1a8">Phone call</div>
<div style="position:absolute;left:12px;top:386px;width:258px;height:50px;background:#fff;border:1px solid #e1e5e8;border-radius:12px"></div>
<div class="t" style="left:22px;top:396px;font-size:11.5px;line-height:19px">In the twenty-five years that have passed since<br>the first edition of the book.</div>
<div class="t" style="left:205px;top:441px;font-size:7.5px;color:#9aa1a8">Mon 27 Feb, 17:25</div>
<div style="position:absolute;left:0;top:449px;width:100%;height:53px;background:#f5f7f8"></div>
<div style="position:absolute;left:12px;top:459px;width:218px;height:29px;background:#fff;border:1px solid #e1e5e8;border-radius:15px"></div>
<div class="t" style="left:22px;top:469px;font-size:10px;color:#a5acb2">Start typing...</div>
<div style="position:absolute;left:237px;top:458px;width:32px;height:32px;border-radius:50%;background:#00857a"></div>
<svg style="position:absolute;left:245px;top:466px" width="16" height="16"><path d="M1 1l14 7-14 7 2.5-7zM3.5 8H9" fill="none" stroke="#fff" stroke-width="1.4" stroke-linejoin="round"/></svg>
<div class="hd"></div>
<div class="sb"><svg style="position:absolute;left:239px;top:5px" width="36" height="9"><use href="#sbar"/></svg></div>
<svg style="position:absolute;left:13px;top:35px" width="17" height="12"><use href="#back"/></svg>
<div class="ttl">Financial analyst</div>
<div class="tab" style="left:47px">Overview</div><div class="tab" style="left:141px">Activities</div><div class="tab a" style="left:235px">Notes</div>
<div class="ul" style="left:201px"></div>
</div>

<!-- B4 application sheet -->
<div class="ph" style="left:964px;top:541px;background:#fff">
<div style="position:absolute;left:0;top:18px;width:100%;height:60px;background:#9c9c9c"></div>
<div class="sb"><svg style="position:absolute;left:239px;top:5px" width="36" height="9"><use href="#sbar"/></svg></div>
<svg style="position:absolute;left:15px;top:35px" width="14" height="13"><use href="#ham"/></svg>
<svg style="position:absolute;left:128px;top:32px" width="25" height="17" viewBox="0 0 24 16"><path d="M0 3 L6 1.5 L11 15 L7 16 Z M8 3 L14 1.5 L18 13 L14.5 15 Z M16 1 L22 0 Q24 5 20 11 Z" fill="#0a4d45"/></svg>
<svg style="position:absolute;left:208px;top:30px" width="17" height="17"><use href="#bell"/></svg>
<div class="av av3" style="left:239px;top:25px;width:31px;height:31px;filter:brightness(.7)"></div>
<div style="position:absolute;left:0;top:62px;width:100%;height:440px;background:#fff;border-radius:12px 12px 0 0"></div>
<div style="position:absolute;left:109px;top:65px;width:56px;height:3px;border-radius:2px;background:#555"></div>
<div class="av" style="left:39px;top:75px;width:31px;height:31px"></div>
<div class="t" style="left:27px;top:112px;font-size:13px">Jane Doe</div>
<div style="position:absolute;left:12px;top:131px;width:85px;height:25px;border:1px solid #cfd4d8;border-radius:3px;font-size:11.5px;color:#00857a;text-align:center;line-height:23px">See full profile</div>
<svg style="position:absolute;left:159px;top:88px" width="14" height="14"><use href="#phn"/></svg><div class="lk" style="left:177px;top:89px">+32 458-78 51 77</div>
<svg style="position:absolute;left:159px;top:110px" width="14" height="13"><use href="#mail"/></svg><div class="lk" style="left:177px;top:111px">janedoe@gmail.com</div>
<svg style="position:absolute;left:159px;top:132px" width="13" height="13"><use href="#lin"/></svg><div class="lk" style="left:177px;top:133px">linkedin.com/jane.doe</div>
<div class="tab a" style="left:47px;top:170px">Application</div><div class="tab" style="left:141px;top:170px">CV</div><div class="tab" style="left:235px;top:170px">Notes</div>
<div class="ul" style="left:13px;top:189px"></div>
<div style="position:absolute;left:0;top:192px;width:100%;height:1px;background:#dde1e4"></div>
<div class="t" style="left:12px;top:205px;font-size:12px">10/08/2021, 13:00</div><div class="bd g" style="left:109px;top:204px;font-size:8.5px;line-height:14px;height:14px;padding:0 4px">done</div>
<div style="position:absolute;left:144px;top:211px;width:125px;height:1px;background:#d5d9dc"></div>
<div class="t lb" style="left:12px;top:230px">ATTENDEES</div><div class="t v" style="left:107px;top:228px">John Doe, Elvis Presley,</div><div class="t v" style="left:107px;top:244px">Muhammad Ali Clay</div>
<div class="t lb" style="left:12px;top:268px">CREATED ON</div><div class="t v" style="left:107px;top:266px">21/09/2021, 13:00</div>
<div class="t lb" style="left:12px;top:290px">CREATED BY</div><div class="t v" style="left:107px;top:288px">John Braun</div>
<div class="t" style="left:12px;top:322px;font-size:12px">21/09/2021, 10:30</div><div class="bd y" style="left:109px;top:321px;font-size:8.5px;line-height:14px;height:14px;padding:0 4px">sent</div>
<div class="t lb" style="left:12px;top:346px">ATTENDEES</div><div class="t v" style="left:107px;top:344px">John Doe, Elvis Presley</div>
<div class="t lb" style="left:12px;top:368px">CREATED ON</div><div class="t v" style="left:107px;top:366px">21/09/2021, 13:00</div>
<div class="t lb" style="left:12px;top:390px">CREATED BY</div><div class="t v" style="left:107px;top:388px">John Braun</div>
<div class="t" style="left:12px;top:422px;font-size:12px">21/09/2021, 10:30</div><div class="bd y" style="left:109px;top:421px;font-size:8.5px;line-height:14px;height:14px;padding:0 4px">sent</div>
<div style="position:absolute;left:142px;top:428px;width:127px;height:1px;background:#d5d9dc"></div>
<div style="position:absolute;left:0;top:448px;width:100%;height:54px;background:#fff;border-top:1px solid #e4e7ea"></div>
<div style="position:absolute;left:82px;top:460px;width:67px;height:30px;border:1px solid #cfd4d8;border-radius:3px;font-size:11.5px;line-height:28px;padding-left:11px;background:#fff">Other <span style="font-size:9px;margin-left:6px">&#8964;</span></div>
<div style="position:absolute;left:156px;top:460px;width:114px;height:30px;border-radius:3px;background:#00857a;color:#fff;font-size:11.5px;line-height:30px;text-align:center">Propose interview</div>
</div>

<!-- B5 CV -->
<div class="ph" style="left:1286px;top:541px;background:#fff">
<div style="position:absolute;left:0;top:18px;width:100%;height:60px;background:#9c9c9c"></div>
<div class="sb"><svg style="position:absolute;left:239px;top:5px" width="36" height="9"><use href="#sbar"/></svg></div>
<svg style="position:absolute;left:15px;top:35px" width="14" height="13"><use href="#ham"/></svg>
<svg style="position:absolute;left:128px;top:32px" width="25" height="17" viewBox="0 0 24 16"><path d="M0 3 L6 1.5 L11 15 L7 16 Z M8 3 L14 1.5 L18 13 L14.5 15 Z M16 1 L22 0 Q24 5 20 11 Z" fill="#0a4d45"/></svg>
<svg style="position:absolute;left:208px;top:30px" width="17" height="17"><use href="#bell"/></svg>
<div class="av av3" style="left:239px;top:25px;width:31px;height:31px;filter:brightness(.7)"></div>
<div style="position:absolute;left:0;top:62px;width:100%;height:440px;background:#fff;border-radius:12px 12px 0 0"></div>
<div style="position:absolute;left:109px;top:65px;width:56px;height:3px;border-radius:2px;background:#555"></div>
<div class="av" style="left:39px;top:75px;width:31px;height:31px"></div>
<div class="t" style="left:27px;top:112px;font-size:13px">Jane Doe</div>
<div style="position:absolute;left:12px;top:131px;width:85px;height:25px;border:1px solid #cfd4d8;border-radius:3px;font-size:11.5px;color:#00857a;text-align:center;line-height:23px">See full profile</div>
<svg style="position:absolute;left:159px;top:88px" width="14" height="14"><use href="#phn"/></svg><div class="lk" style="left:177px;top:89px">+32 458-78 51 77</div>
<svg style="position:absolute;left:159px;top:110px" width="14" height="13"><use href="#mail"/></svg><div class="lk" style="left:177px;top:111px">janedoe@gmail.com</div>
<svg style="position:absolute;left:159px;top:132px" width="13" height="13"><use href="#lin"/></svg><div class="lk" style="left:177px;top:133px">linkedin.com/jane.doe</div>
<div class="tab" style="left:47px;top:170px">Application</div><div class="tab a" style="left:141px;top:170px">CV</div><div class="tab" style="left:235px;top:170px">Notes</div>
<div class="ul" style="left:107px;top:189px"></div>
<div style="position:absolute;left:0;top:192px;width:100%;height:1px;background:#dde1e4"></div>
<div style="position:absolute;left:69px;top:217px;width:143px;height:204px;background:#fff;border:1px solid #d5d9dc;box-shadow:0 1px 3px rgba(0,0,0,.1)"></div>
<div style="position:absolute;left:70px;top:218px;width:44px;height:202px;background:#eceef0"></div>
<div style="position:absolute;left:79px;top:225px;width:26px;height:29px;background:#3a3a3a"></div>
<div style="position:absolute;left:86px;top:229px;width:12px;height:15px;border-radius:50%;background:#8a5a3c"></div>
<svg style="position:absolute;left:72px;top:258px" width="140" height="160">
<g stroke="#b9bec3" stroke-width="1">
<path d="M3 2h30M3 6h28M3 10h24M3 14h26M3 18h22M3 34h30M3 38h28M3 42h25M3 50h30M3 54h26M3 62h28M3 66h30M3 70h24M3 86h28M3 90h30M3 98h26M3 102h28M3 118h30M3 122h26M3 140h28M3 144h30M3 148h22"/>
<path d="M50 12h60M50 20h70M50 24h64M50 28h68M50 32h60M50 36h66M50 40h70M50 44h58M50 52h64M50 60h70M50 64h66M50 68h62M50 72h68M50 76h60M50 80h70M50 84h64M50 92h66M50 96h70M50 100h60M50 104h64M50 108h68M50 116h60M50 120h70M50 124h66M50 128h62M50 136h70M50 148h66M50 152h60"/>
</g>
<g stroke="#7fb6e0" stroke-width="1"><path d="M3 28h14M3 80h14M50 112h30"/></g>
</svg>
<div style="position:absolute;left:0;top:448px;width:100%;height:54px;background:#fff;border-top:1px solid #e4e7ea"></div>
<div style="position:absolute;left:82px;top:460px;width:67px;height:30px;border:1px solid #cfd4d8;border-radius:3px;font-size:11.5px;line-height:28px;padding-left:11px;background:#fff">Other <span style="font-size:9px;margin-left:6px">&#8964;</span></div>
<div style="position:absolute;left:156px;top:460px;width:114px;height:30px;border-radius:3px;background:#00857a;color:#fff;font-size:11.5px;line-height:30px;text-align:center">Propose interview</div>
</div>

</div></body></html>
